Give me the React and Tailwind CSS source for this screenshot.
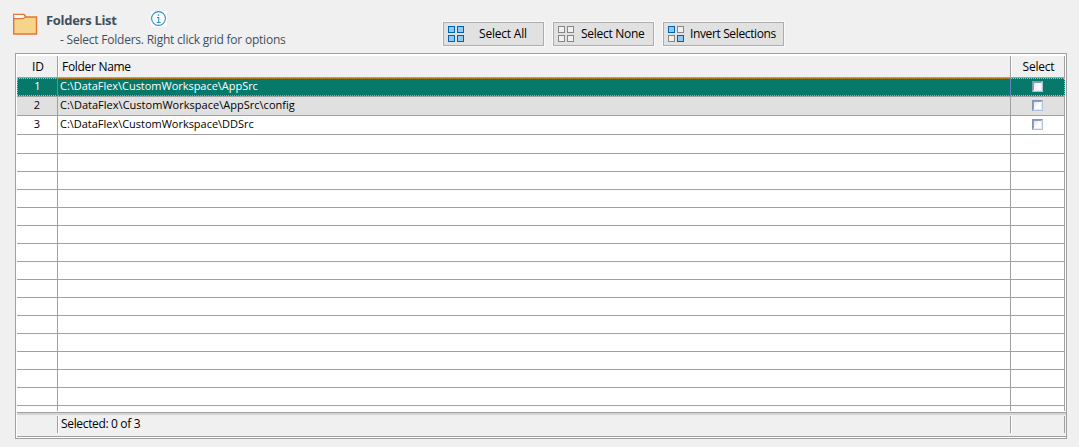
import React from "react";

const folders = [
  "C:\\DataFlex\\CustomWorkspace\\AppSrc",
  "C:\\DataFlex\\CustomWorkspace\\AppSrc\\config",
  "C:\\DataFlex\\CustomWorkspace\\DDSrc",
];
const nameSpacing = ["tracking-[-0.03px]", "tracking-[0.02px]", "tracking-[-0.02px]"];

function FolderIcon() {
  return (
    <svg className="h-[23px] w-[25px] shrink-0" viewBox="0 0 25 23" fill="none">
      <path d="M.7 1.5h10.3l1.8 2.5H23.5v17H.7z" fill="#f5d58b" stroke="#e57535" strokeWidth="1.4" />
      <path d="M.7 1.5h10.1l1.7 2.2-2.2 1.9H.7z" fill="#fff" stroke="#e57535" strokeWidth="1.2" />
    </svg>
  );
}

function InfoIcon() {
  return (
    <svg className="h-4 w-4 shrink-0 bg-white" viewBox="0 0 16 16" fill="none">
      <circle cx="7.5" cy="7.5" r="6.9" stroke="#2b8fd0" strokeWidth="1.1" />
      <path d="M6 6.5h1.7v4.8M5.7 11.5h4" stroke="#2b8fd0" strokeWidth="1.1" />
      <rect x="6.8" y="3.4" width="1.4" height="1.5" fill="#2b8fd0" />
    </svg>
  );
}

function GridIcon({ filled }) {
  const spots = [[0.5, 0.5], [9.5, 0.5], [0.5, 9.5], [9.5, 9.5]];
  return (
    <svg className="h-4 w-4 shrink-0" viewBox="0 0 16 16">
      {spots.map(([x, y], i) => (
        <rect key={i} x={x} y={y} width="6" height="6"
          fill={filled[i] ? "#91c9f0" : "#f0f0f0"} stroke={filled[i] ? "#0063b1" : "#868686"} />
      ))}
    </svg>
  );
}

function Button({ width, gap, filled, spacing, children }) {
  return (
    <button className={`flex h-6 items-center border border-[#adadad] bg-[#e1e1e1] pl-1 text-[12px] leading-4 text-black outline outline-1 outline-[#f9f9f9] ${width} ${gap}`}>
      <GridIcon filled={filled} />
      <span className={`whitespace-nowrap ${spacing}`}>{children}</span>
    </button>
  );
}

function Checkbox() {
  return (
    <span className="flex h-[11px] w-[11px] border border-[#8496b4] border-r-[#b0c1dc] border-b-[#b0c1dc] bg-[#8496b4]">
      <span className="flex-1 border border-[#8e9fbd] border-r-[#e4ebf5] border-b-[#e4ebf5] bg-linear-to-br from-[#dde3f0] to-white to-60%" />
    </span>
  );
}

function FocusLine({ color }) {
  return <div className={`h-px bg-size-[2px_1px] ${color}`} />;
}

const pinkDots = "bg-[linear-gradient(90deg,#f8a0a0_50%,#07796a_50%)]";
const brownDots = "bg-[linear-gradient(90deg,#c08428_50%,#5f7b48_50%)]";
const greyDots = "bg-[linear-gradient(90deg,#8fa39e_50%,#07796a_50%)]";

function Row({ index, name }) {
  const active = index === 0;
  const tone = active ? "bg-[#07796a] text-white" : index === 1 ? "bg-[#e0e0e0]" : "bg-white";
  const plain = "bg-transparent";
  return (
    <div className={`flex h-[19px] border-b border-[#a0a0a0] text-[11px] leading-[14px] ${tone}`}>
      <div className="flex w-[40px] flex-col">
        <FocusLine color={active ? pinkDots : plain} />
        <div className={`h-4 text-center ${active ? "border-l border-dotted border-[#f8a0a0]" : ""}`}>{index + 1}</div>
        <FocusLine color={active ? pinkDots : plain} />
      </div>
      <div className={`w-px ${active ? "bg-[#6585bd]" : "bg-[#a0a0a0]"}`} />
      <div className="flex w-[952px] flex-col">
        <FocusLine color={active ? brownDots : plain} />
        <div className="h-4 pl-[2px]"><span className={nameSpacing[index]}>{name}</span></div>
        <FocusLine color={active ? greyDots : plain} />
      </div>
      <div className={`w-px ${active ? "bg-[#6585bd]" : "bg-[#a0a0a0]"}`} />
      <div className="flex w-[53px] flex-col">
        <FocusLine color={active ? pinkDots : plain} />
        <div className="flex h-4 items-start justify-center pt-[2px]"><Checkbox /></div>
        <FocusLine color={active ? pinkDots : plain} />
      </div>
      <div className={`w-px ${active ? "border-l border-dotted border-[#f8a0a0]" : "bg-[#a0a0a0]"}`} />
    </div>
  );
}

function EmptyRow({ height, line }) {
  return (
    <div className={`flex ${height} ${line ? "border-b border-[#a0a0a0]" : ""}`}>
      <div className="w-[40px]" />
      <div className="w-px bg-[#a0a0a0]" />
      <div className="w-[952px]" />
      <div className="w-px bg-[#a0a0a0]" />
      <div className="w-[53px]" />
      <div className="w-px bg-[#a0a0a0]" />
    </div>
  );
}

export default function App() {
  return (
    <div className="h-[447px] w-[1079px] overflow-hidden bg-[#f0f0f0] font-['Open_Sans','Noto_Sans',sans-serif] text-black">
      <header className="flex h-[53px]">
        <div className="ml-[13px] pt-[13px]"><FolderIcon /></div>
        <div className="ml-2 w-[397px] pt-[11px] text-[#3f4f5c]">
          <div className="flex h-[19px]">
            <h1 className="w-[105px] text-[13px] leading-[18px] font-bold tracking-[-0.3px] whitespace-nowrap">Folders List</h1>
            <InfoIcon />
          </div>
          <p className="pl-[14px] text-[12px] leading-[20px] tracking-[-0.22px] whitespace-nowrap">- Select Folders. Right click grid for options</p>
        </div>
        <div className="flex gap-[9px] pt-[22px]">
          <Button width="w-[101px]" gap="gap-[15px]" spacing="tracking-[-0.2px]" filled={[1, 1, 1, 1]}>Select All</Button>
          <Button width="w-[101px]" gap="gap-[7px]" spacing="tracking-[-0.28px]" filled={[0, 0, 0, 0]}>Select None</Button>
          <Button width="w-[121px]" gap="gap-[6px]" spacing="tracking-[-0.37px]" filled={[1, 0, 0, 1]}>Invert Selections</Button>
        </div>
      </header>
      <main className="ml-[15px] h-[386px] w-[1052px] border border-[#a0a0a0] bg-white p-px">
        <div className="flex h-[23px] w-[1048px] border-t border-b border-t-white border-b-[#a0a0a0] bg-[#f0f0f0] text-[12px] leading-[21px]">
          <div className="w-[40px] pl-[2px] text-center">ID</div>
          <div className="w-px bg-[#a0a0a0]" />
          <div className="w-[952px] border-l border-white pl-[3px]"><span className="tracking-[-0.3px]">Folder Name</span></div>
          <div className="w-px bg-[#a0a0a0]" />
          <div className="w-[53px] border-l border-white pl-px text-center"><span className="tracking-[-0.2px]">Select</span></div>
          <div className="w-px bg-[#a0a0a0]" />
        </div>
        <div className="h-[334px]">
          {folders.map((name, i) => <Row key={name} index={i} name={name} />)}
          <EmptyRow height="h-[19px]" line />
          {Array.from({ length: 14 }, (_, i) => <EmptyRow key={i} height="h-[18px]" line />)}
          <EmptyRow height="h-[5px]" />
        </div>
        <div className="h-[25px] w-[1049px] border-t border-b border-[#a0a0a0] bg-[#f0f0f0]">
          <div className="h-[2px] bg-[#d5d5d5]" />
          <div className="flex pt-px text-[12px] leading-[15px]">
            <div className="w-[40px]" />
            <div className="h-[17px] w-px bg-[#a0a0a0]" />
            <div className="h-[18px] w-[952px] border-l border-white pl-[2px]"><span className="tracking-[-0.34px]">Selected: 0 of 3</span></div>
            <div className="h-[17px] w-px bg-[#a0a0a0]" />
            <div className="h-[18px] w-[53px] border-l border-white" />
            <div className="h-[17px] w-px bg-[#a0a0a0]" />
          </div>
        </div>
      </main>
    </div>
  );
}
